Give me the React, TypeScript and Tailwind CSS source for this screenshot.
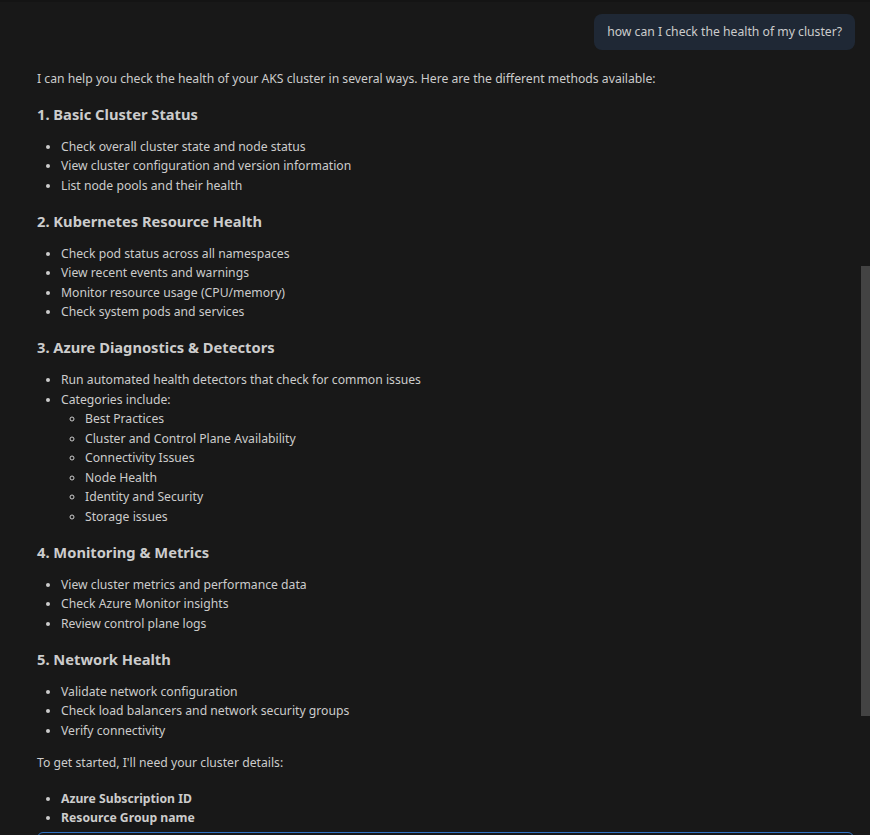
const sections: { title: string; items: (string | { label: string; sub: string[] })[] }[] = [
  {
    title: '1. Basic Cluster Status',
    items: ['Check overall cluster state and node status', 'View cluster configuration and version information', 'List node pools and their health'],
  },
  {
    title: '2. Kubernetes Resource Health',
    items: ['Check pod status across all namespaces', 'View recent events and warnings', 'Monitor resource usage (CPU/memory)', 'Check system pods and services'],
  },
  {
    title: '3. Azure Diagnostics & Detectors',
    items: [
      'Run automated health detectors that check for common issues',
      {
        label: 'Categories include:',
        sub: ['Best Practices', 'Cluster and Control Plane Availability', 'Connectivity Issues', 'Node Health', 'Identity and Security', 'Storage issues'],
      },
    ],
  },
  {
    title: '4. Monitoring & Metrics',
    items: ['View cluster metrics and performance data', 'Check Azure Monitor insights', 'Review control plane logs'],
  },
  {
    title: '5. Network Health',
    items: ['Validate network configuration', 'Check load balancers and network security groups', 'Verify connectivity'],
  },
];

export default function App() {
  return (
    <div
      className="relative h-[835px] w-[870px] overflow-hidden bg-[#181818] text-[12.2px] leading-[19.5px] text-[#cccccc]"
      style={{ fontFamily: '"Segoe UI", "Noto Sans", sans-serif' }}
    >
      <div className="h-[2px] bg-[#141414]" />
      <div className="pl-[37px] pr-[15px] pt-[12px]">
        {/* user message */}
        <div className="flex justify-end">
          <div className="rounded-lg bg-[#1f2835] px-[13px] py-[8px]">how can I check the health of my cluster?</div>
        </div>

        {/* assistant reply */}
        <p className="mt-[19px]">
          I can help you check the health of your AKS cluster in several ways. Here are the different methods available:
        </p>

        {sections.map((s) => (
          <div key={s.title}>
            <h3 className="mt-[14.5px] text-[14.7px] font-bold leading-[22px]">{s.title}</h3>
            <ul className="mt-[12px] list-disc pl-6">
              {s.items.map((it) =>
                typeof it === 'string' ? (
                  <li key={it}>{it}</li>
                ) : (
                  <li key={it.label}>
                    {it.label}
                    <ul className="list-[circle] pl-6">
                      {it.sub.map((x) => (
                        <li key={x}>{x}</li>
                      ))}
                    </ul>
                  </li>
                ),
              )}
            </ul>
          </div>
        ))}

        <p className="mt-[13px]">To get started, I'll need your cluster details:</p>
        <ul className="mt-[16px] list-disc pl-6 font-bold">
          <li>Azure Subscription ID</li>
          <li>Resource Group name</li>
        </ul>
      </div>

      {/* chat input peeking in at the bottom */}
      <div className="absolute left-[37px] top-[832px] h-[60px] w-[817px] rounded-md border border-[#2f72c4]" />

      {/* scrollbar thumb */}
      <div className="absolute right-0 top-[266px] h-[450px] w-[9px] bg-[#434343]" />
    </div>
  );
}
